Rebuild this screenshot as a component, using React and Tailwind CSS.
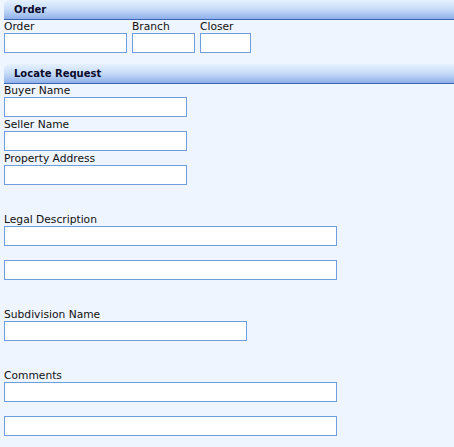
const font = { fontFamily: '"DejaVu Sans", Verdana, sans-serif' };

function Header({ title }) {
  return (
    <div className="ml-1 flex h-5 items-center rounded-tl-[6px] border-b border-[#3c64b4] bg-gradient-to-b from-[#e6f1ff] via-[#c6dbf8] to-[#8fb0ea] pl-[10px] text-[10px] font-bold leading-none text-[#0a0a2a]">
      {title}
    </div>
  );
}

function Label({ children }) {
  return <div className="h-[13px] whitespace-nowrap text-[10.7px] leading-[13px] text-[#111]">{children}</div>;
}

function Field({ w }) {
  return (
    <input
      type="text"
      className={`mb-px block h-5 border border-[#6f9ede] bg-white outline-none ${w}`}
    />
  );
}

export default function App() {
  return (
    <div className="h-[447px] w-[454px] overflow-hidden bg-[#eef5ff]" style={font}>
      <Header title="Order" />
      <div className="flex pl-1">
        <div className="w-[128px]">
          <Label>Order</Label>
          <Field w="w-[123px]" />
        </div>
        <div className="w-[68px]">
          <Label>Branch</Label>
          <Field w="w-[63px]" />
        </div>
        <div>
          <Label>Closer</Label>
          <Field w="w-[51px]" />
        </div>
      </div>

      <div className="mt-[10px]">
        <Header title="Locate Request" />
      </div>
      <div className="pl-1">
        <Label>Buyer Name</Label>
        <Field w="w-[183px]" />
        <Label>Seller Name</Label>
        <Field w="w-[183px]" />
        <Label>Property Address</Label>
        <Field w="w-[183px]" />

        <div className="mt-[28px]">
          <Label>Legal Description</Label>
        </div>
        <Field w="w-[333px]" />
        <Label />
        <Field w="w-[333px]" />

        <div className="mt-[28px]">
          <Label>Subdivision Name</Label>
        </div>
        <Field w="w-[243px]" />

        <div className="mt-[28px]">
          <Label>Comments</Label>
        </div>
        <Field w="w-[333px]" />
        <Label />
        <Field w="w-[333px]" />
      </div>
    </div>
  );
}
